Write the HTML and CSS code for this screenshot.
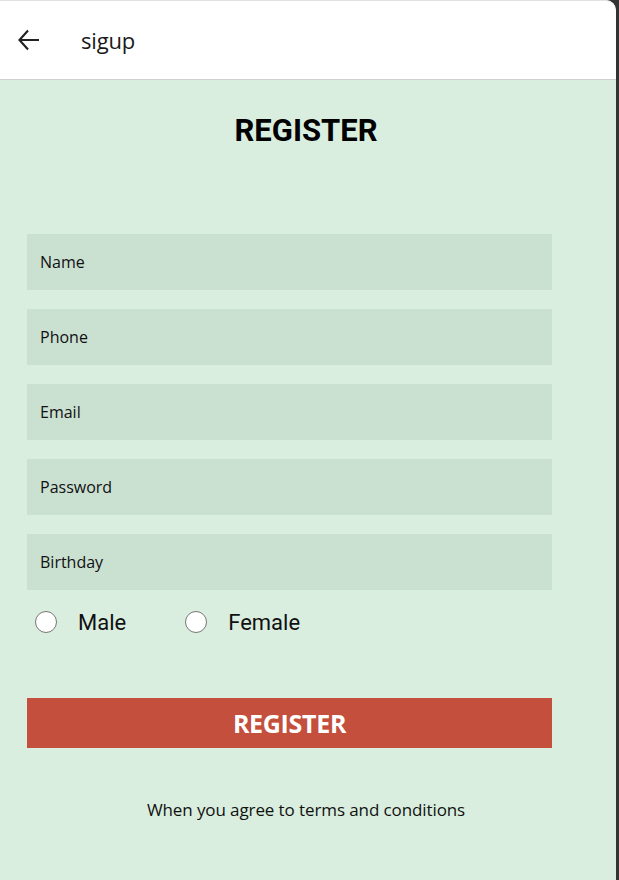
FILE: index.html
```html
<!DOCTYPE html>
<html>
<head>
<meta charset="utf-8">
<link rel="stylesheet" href="styles.css">
</head>
<body>
<div class="frame">
  <header class="topbar">
    <svg class="back" width="24" height="24" viewBox="0 0 24 24">
      <path d="M11 2.5 L2.5 12 L11 21.5 M2.5 12 H22" fill="none" stroke="#222" stroke-width="2.1"/>
    </svg>
    <span class="title">sigup</span>
  </header>
  <main class="content">
    <h1 class="heading">REGISTER</h1>
    <div class="fields">
      <div class="field">Name</div>
      <div class="field">Phone</div>
      <div class="field">Email</div>
      <div class="field">Password</div>
      <div class="field">Birthday</div>
    </div>
    <div class="gender">
      <label class="opt"><span class="radio"></span><span class="lbl">Male</span></label>
      <label class="opt"><span class="radio"></span><span class="lbl">Female</span></label>
    </div>
    <button class="submit">REGISTER</button>
    <p class="terms">When you agree to terms and conditions</p>
  </main>
</div>
</body>
</html>
```
FILE: styles.css
```css
html, body {
  margin: 0;
  padding: 0;
  height: 100%;
}
body {
  background: #333;
  font-family: "Open Sans", "Noto Sans", sans-serif;
}
.frame {
  width: 616px;
  height: 880px;
  background: #d9eedf;
  border-top-right-radius: 10px;
  overflow: hidden;
  display: flex;
  flex-direction: column;
}
.topbar {
  height: 78px;
  flex: none;
  background: #fff;
  border-top: 1px solid #e2e2e2;
  border-bottom: 1px solid #d0d0d0;
  display: flex;
  align-items: center;
  border-top-right-radius: 10px;
}
.back {
  margin-left: 17px;
  width: 24px;
  height: 24px;
}
.title {
  margin-left: 40px;
  font-size: 22px;
  font-weight: 500;
  color: #1a1a1a;
  letter-spacing: -0.2px;
}
.content {
  padding: 0 64px 0 27px;
  display: flex;
  flex-direction: column;
}
.heading {
  margin: 33px 0 0 0;
  font-family: Roboto, sans-serif;
  font-weight: 700;
  font-size: 31px;
  line-height: 36px;
  text-align: center;
  color: #000;
  padding-left: 33px;
}
.fields {
  margin-top: 85px;
  display: flex;
  flex-direction: column;
  gap: 19px;
}
.field {
  height: 56px;
  background: #cae0d1;
  display: flex;
  align-items: center;
  padding-left: 13px;
  font-size: 16px;
  color: #111;
}
.gender {
  display: flex;
  align-items: center;
  height: 44px;
  margin-top: 10px;
  padding-left: 8px;
}
.opt {
  display: flex;
  align-items: center;
}
.opt + .opt {
  margin-left: 59px;
}
.radio {
  width: 20px;
  height: 20px;
  border: 1px solid #777;
  border-radius: 50%;
  background: #fff;
}
.lbl {
  margin-left: 21px;
  font-family: Roboto, sans-serif;
  font-size: 22px;
  color: #111;
}
.submit {
  margin-top: 54px;
  height: 50px;
  border: none;
  background: #c44f3c;
  color: #fff;
  font-family: "Open Sans", sans-serif;
  font-weight: 700;
  font-size: 25px;
  letter-spacing: -0.3px;
  padding: 0;
}
.terms {
  margin: 50px 0 0 0;
  padding-left: 33px;
  text-align: center;
  font-size: 17px;
  color: #111;
  letter-spacing: -0.1px;
}
```
